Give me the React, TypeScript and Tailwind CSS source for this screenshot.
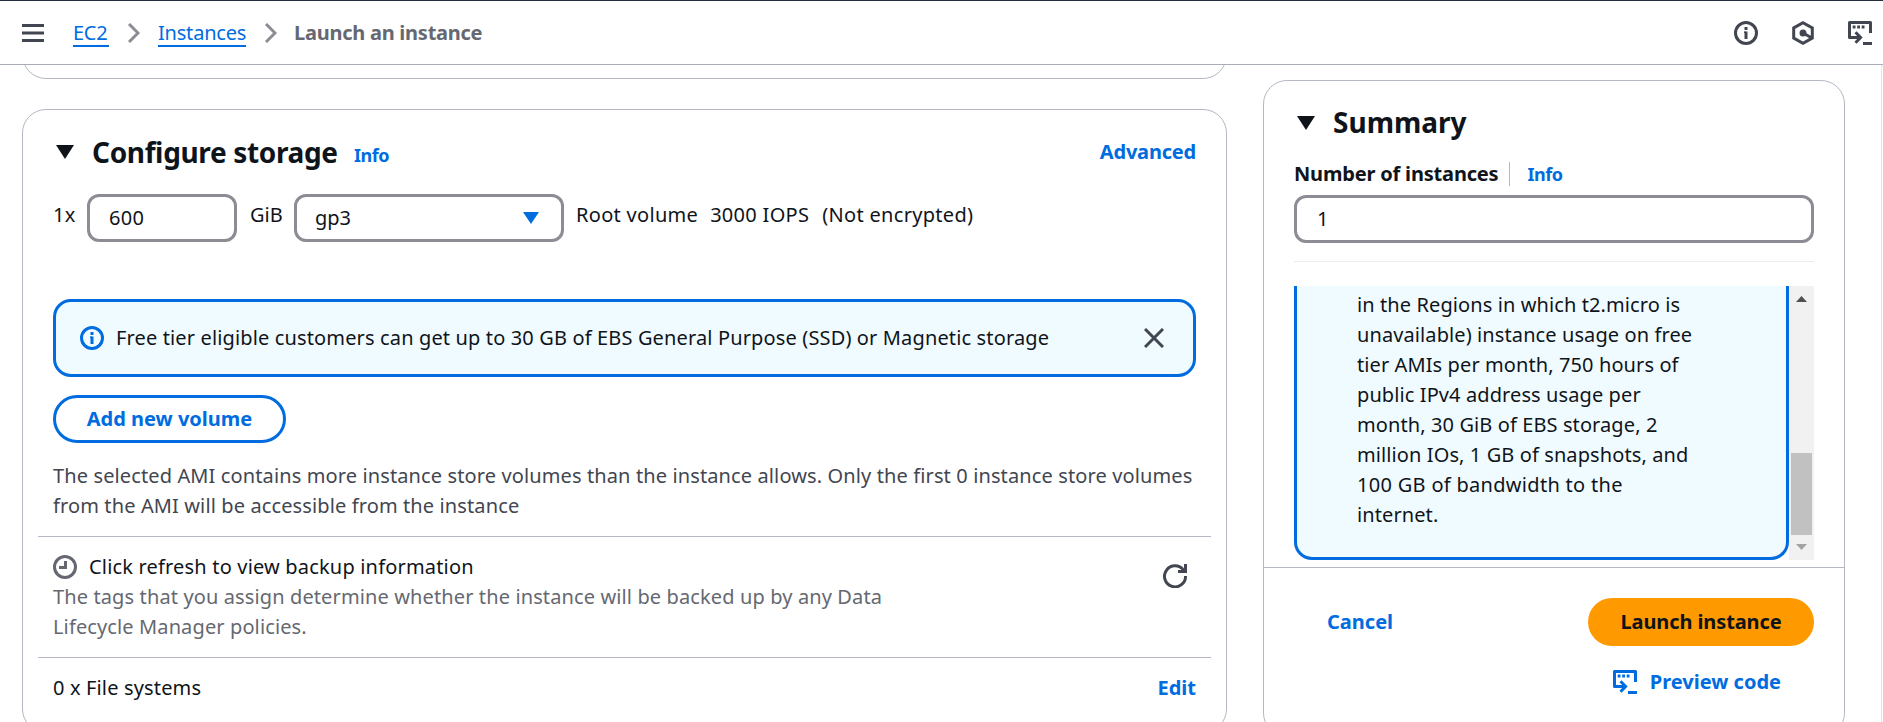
import React from "react";

function CodeIcon({ className }: { className: string }) {
  return (
    <svg viewBox="0 0 24 24" width="24" height="24" fill="none" stroke="currentColor" strokeWidth="3" strokeLinejoin="round" className={className}>
      <path d="M22.5 12V1.5H1.5V16.5H12" />
      <path d="M7.5 11.3L12.6 16.5L7.5 21.7" strokeLinejoin="miter" />
      <path d="M15 22.5H24" />
      <path d="M4.7 6h2.8M9.2 6h2.8M13.7 6h2.8" />
    </svg>
  );
}

function InfoIcon({ className }: { className: string }) {
  return (
    <svg viewBox="0 0 24 24" width="24" height="24" fill="none" stroke="currentColor" strokeWidth="3" className={className}>
      <circle cx="12" cy="12" r="10.5" />
      <path d="M12 10.5V18M12 6V9" />
      <path d="M10 11.2H12" strokeWidth="1.5" />
    </svg>
  );
}

function Triangle({ className }: { className: string }) {
  return (
    <svg viewBox="0 0 18 14" width="18" height="14" preserveAspectRatio="none" fill="currentColor" className={className}>
      <path d="M0 0H18L9 14Z" />
    </svg>
  );
}

function Chevron({ className }: { className: string }) {
  return (
    <svg viewBox="0 0 12 20" width="12" height="20" fill="none" stroke="#8c8c94" strokeWidth="3" className={className}>
      <path d="M1 1L10 10L1 19" />
    </svg>
  );
}

function Header() {
  return (
    <header className="flex h-[65px] shrink-0 items-center border-t border-b border-t-[#232f3e] border-b-[#a9adb8] bg-white pr-[11px] pl-[22px]">
      <svg viewBox="0 0 22 18" width="22" height="18" stroke="#424650" strokeWidth="3">
        <path d="M0 1.5H22M0 9H22M0 16.5H22" />
      </svg>
      <nav className="ml-[29px] flex items-center whitespace-nowrap">
        <a className="w-9 border-b-2 border-[#006ce0] pt-px leading-[25px] tracking-[-0.3px] text-[#006ce0]">EC2</a>
        <Chevron className="ml-[19px]" />
        <a className="ml-[18px] w-[88px] border-b-2 border-[#006ce0] pt-px leading-[25px] tracking-[-0.2px] text-[#006ce0]">Instances</a>
        <Chevron className="ml-[19px]" />
        <span className="ml-[17px] font-bold tracking-[-0.25px] text-[#656871]">Launch an instance</span>
      </nav>
      <div className="ml-auto flex items-center text-[#424650]">
        <InfoIcon className="" />
        <svg viewBox="0 0 24 24" width="24" height="24" fill="none" stroke="currentColor" strokeWidth="3" className="ml-[33px]">
          <path d="M12 1.8L21.3 7V17L12 22.2L2.7 17V7Z" />
          <path d="M12 12L21 17" />
          <circle cx="12" cy="12" r="2" fill="currentColor" />
        </svg>
        <CodeIcon className="ml-[33px]" />
      </div>
    </header>
  );
}

function StoragePanel() {
  return (
    <section className="flex h-[624px] w-[1205px] shrink-0 flex-col rounded-[24px] border border-[#b4b8c4] bg-white px-[15px]">
      <div className="mt-[22px] flex h-10 items-center px-[15px] whitespace-nowrap">
        <Triangle className="-mt-px ml-[3px] text-[#0f141a]" />
        <h2 className="-mt-px ml-[18px] w-[247px] text-[28px] font-bold tracking-[-0.35px]">Configure storage</h2>
        <a className="mt-[7px] ml-[15px] text-[18px] font-bold tracking-[-0.5px] text-[#006ce0]">Info</a>
        <a className="ml-auto font-bold tracking-[-0.2px] text-[#006ce0]">Advanced</a>
      </div>
      <div className="mt-[22px] flex h-12 px-[15px] tracking-[0.3px] whitespace-nowrap">
        <span className="mt-[6px] w-[34px] leading-[30px]">1x</span>
        <div className="flex h-12 w-[150px] items-center rounded-[12px] border-3 border-[#8c8c94] px-[19px]">600</div>
        <span className="mt-[6px] ml-[13px] w-[44px] leading-[30px] tracking-normal">GiB</span>
        <div className="flex h-12 w-[270px] items-center justify-between rounded-[12px] border-3 border-[#8c8c94] pr-[22px] pl-[18px] tracking-normal">
          gp3
          <Triangle className="h-3 w-4 text-[#006ce0]" />
        </div>
        <span className="mt-[6px] ml-3 leading-[30px]">Root volume</span>
        <span className="mt-[6px] ml-3 leading-[30px]">3000 IOPS</span>
        <span className="mt-[6px] ml-[13px] leading-[30px]">(Not encrypted)</span>
      </div>
      <div className="mx-[15px] mt-[57px] flex h-[78px] items-center rounded-[18px] border-3 border-[#006ce0] bg-[#f0fbff] pr-[29px] pl-6 whitespace-nowrap">
        <InfoIcon className="text-[#006ce0]" />
        <span className="ml-3 tracking-[0.14px]">Free tier eligible customers can get up to 30 GB of EBS General Purpose (SSD) or Magnetic storage</span>
        <svg viewBox="0 0 20 20" width="20" height="20" stroke="#424650" strokeWidth="3" className="ml-auto">
          <path d="M1 1L19 19M19 1L1 19" />
        </svg>
      </div>
      <button className="mt-[18px] ml-[15px] h-12 w-[233px] shrink-0 rounded-full border-3 border-[#006ce0] font-bold text-[#006ce0]">Add new volume</button>
      <p className="mt-[18px] ml-[15px] leading-[30px] tracking-[0.12px] whitespace-nowrap text-[#424650]">
        The selected AMI contains more instance store volumes than the instance allows. Only the first 0 instance store volumes
        <br />
        from the AMI will be accessible from the instance
      </p>
      <div className="mt-[15px] flex h-[121px] border-t border-[#b4b8c4] pt-[15px] pl-[15px] whitespace-nowrap">
        <div>
          <div className="flex h-[30px] items-center">
            <svg viewBox="0 0 24 24" width="24" height="24" fill="none" stroke="#656871" strokeWidth="3">
              <circle cx="12" cy="12" r="10.5" />
              <path d="M12.5 6V12.5H6" />
            </svg>
            <span className="ml-3 tracking-[0.18px]">Click refresh to view backup information</span>
          </div>
          <p className="leading-[30px] tracking-[0.12px] text-[#656871]">
            The tags that you assign determine whether the instance will be backed up by any Data
            <br />
            Lifecycle Manager policies.
          </p>
        </div>
        <svg viewBox="0 0 24 24" width="24" height="24" fill="none" stroke="#424650" strokeWidth="3" className="mt-3 mr-6 ml-auto">
          <path d="M22.5 12A10.5 10.5 0 1 1 20.5 6.2L22 8" />
          <path d="M22.5 0V7.5H15" />
        </svg>
      </div>
      <div className="flex border-t border-[#b4b8c4] px-[15px] pt-[15px] leading-[30px]">
        <span className="tracking-[0.15px]">0 x File systems</span>
        <a className="ml-auto font-bold text-[#006ce0]">Edit</a>
      </div>
    </section>
  );
}

function SummaryPanel() {
  return (
    <aside className="mt-[15px] flex h-[657px] w-[582px] shrink-0 flex-col rounded-[24px] border border-[#b4b8c4] bg-white">
      <div className="mx-[30px] mt-[21px] flex h-10 items-center">
        <Triangle className="mt-px ml-[3px] text-[#0f141a]" />
        <h2 className="ml-[18px] text-[28px] font-bold">Summary</h2>
      </div>
      <div className="mx-[30px] mt-[17px] flex h-[30px] items-center">
        <span className="font-bold tracking-[-0.18px]">Number of instances</span>
        <span className="ml-[11px] h-6 w-px bg-[#b4b8c4]" />
        <a className="ml-[17px] text-[18px] font-bold tracking-[-0.5px] text-[#006ce0]">Info</a>
      </div>
      <div className="mx-[30px] mt-[6px] flex h-12 items-center rounded-[12px] border-3 border-[#8c8c94] px-5">1</div>
      <div className="mx-[30px] mt-[18px] h-px bg-[#ebebf0]" />
      <div className="mx-[30px] mt-6 flex h-[274px] shrink-0">
        <div className="w-[495px] rounded-b-[18px] border-3 border-t-0 border-[#006ce0] bg-[#f0fbff] pt-[4px] pl-[60px] leading-[30px] tracking-[0.1px] whitespace-nowrap">
          in the Regions in which t2.micro is
          <br />
          unavailable) instance usage on free
          <br />
          tier AMIs per month, 750 hours of
          <br />
          public IPv4 address usage per
          <br />
          month, 30 GiB of EBS storage, 2
          <br />
          million IOs, 1 GB of snapshots, and
          <br />
          <span className="tracking-[0.3px]">100 GB of bandwidth to the</span>
          <br />
          internet.
        </div>
        <div className="flex w-[25px] flex-col items-center bg-[#f1f1f1]">
          <Triangle className="mt-2.5 h-[6px] w-[11px] rotate-180 text-[#505050]" />
          <div className="mt-[151px] h-[82px] w-[21px] bg-[#c1c1c1]" />
          <Triangle className="mt-[9px] h-[6px] w-[11px] text-[#a3a3a3]" />
        </div>
      </div>
      <div className="mt-[7px] flex flex-col border-t border-[#b4b8c4] px-[30px] pt-[30px] font-bold">
        <div className="flex h-12 items-center justify-between">
          <a className="ml-[33px] text-[#006ce0]">Cancel</a>
          <button className="h-12 w-[226px] rounded-full bg-[#ff9900] font-bold tracking-[-0.1px]">Launch instance</button>
        </div>
        <div className="mt-3 mr-[33px] flex h-12 items-center justify-end text-[#006ce0]">
          <CodeIcon className="mr-[13px]" />
          Preview code
        </div>
      </div>
    </aside>
  );
}

export default function App() {
  return (
    <div className="flex h-[722px] w-[1883px] flex-col overflow-hidden bg-white font-['Noto_Sans',sans-serif] text-[20px] text-[#0f141a]">
      <Header />
      <main className="flex min-h-0 flex-1 pl-[22px]">
        <div className="flex flex-col">
          <div className="flex h-[14px] shrink-0 flex-col justify-end overflow-hidden">
            <div className="h-12 w-[1205px] shrink-0 rounded-b-[24px] border border-[#b4b8c4]" />
          </div>
          <div className="h-[30px] shrink-0" />
          <StoragePanel />
        </div>
        <div className="ml-9">
          <SummaryPanel />
        </div>
        <div className="ml-auto w-[2px] border-l border-[#e0e4f0]" />
      </main>
    </div>
  );
}
